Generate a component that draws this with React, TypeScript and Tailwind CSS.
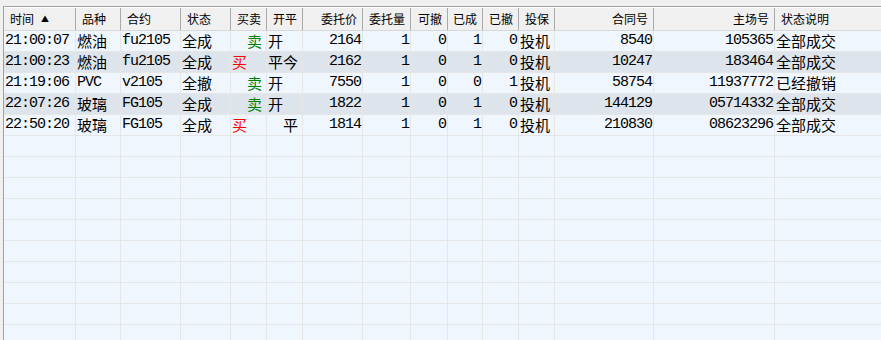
import React from "react";

const cols = [
  { h: "时间 ▲", w: "l" },
  { h: "品种", w: "l" },
  { h: "合约", w: "l" },
  { h: "状态", w: "l" },
  { h: "买卖", w: "l" },
  { h: "开平", w: "l" },
  { h: "委托价", w: "r" },
  { h: "委托量", w: "r" },
  { h: "可撤", w: "r" },
  { h: "已成", w: "r" },
  { h: "已撤", w: "r" },
  { h: "投保", w: "l" },
  { h: "合同号", w: "r" },
  { h: "主场号", w: "r" },
  { h: "状态说明", w: "l" },
];

const rows = [
  ["21:00:07", "燃油", "fu2105", "全成", "卖", "开", "2164", "1", "0", "1", "0", "投机", "8540", "105365", "全部成交"],
  ["21:00:23", "燃油", "fu2105", "全成", "买", "平今", "2162", "1", "0", "1", "0", "投机", "10247", "183464", "全部成交"],
  ["21:19:06", "PVC", "v2105", "全撤", "卖", "开", "7550", "1", "0", "0", "1", "投机", "58754", "11937772", "已经撤销"],
  ["22:07:26", "玻璃", "FG105", "全成", "卖", "开", "1822", "1", "0", "1", "0", "投机", "144129", "05714332", "全部成交"],
  ["22:50:20", "玻璃", "FG105", "全成", "买", "平", "1814", "1", "0", "1", "0", "投机", "210830", "08623296", "全部成交"],
];

const grid =
  "grid grid-cols-[72px_45px_60px_50px_36px_36px_60px_48px_37px_35px_36px_36px_99px_121px_1fr]";

const isCjk = (s: string) => /[\u4e00-\u9fff]/.test(s);

function BodyCell({ v, i }: { v: string; i: number }) {
  const right = cols[i].w === "r";
  let color = "text-black";
  let pad = right ? "justify-end pr-[1px]" : "pl-[1px]";
  if (i === 4) {
    color = v === "卖" ? "text-[#008000]" : "text-[#ff0000]";
    pad = v === "卖" ? "pl-[16px]" : "pl-[1px]";
  }
  if (i === 5 && v === "平") pad = "pl-[16px]";
  const font = isCjk(v)
    ? "font-['Noto_Sans_CJK_SC',sans-serif] text-[15px]"
    : "font-['Liberation_Mono',monospace] text-[15px] tracking-[-1px]";
  return (
    <div
      className={`flex items-center overflow-hidden whitespace-nowrap border-r border-[#e6e6e6] last:border-r-0 ${pad} ${color} ${font}`}
    >
      {v}
    </div>
  );
}

export default function App() {
  const empty = Array.from({ length: 14 }, () => Array(15).fill(""));
  return (
    <div className="w-[881px] h-[340px] overflow-hidden bg-[#f0f0f0] pt-[6px] pl-[3px]">
      <div className="h-full border-t border-l border-[#a0a0a0] bg-[#f0f6fe]">
        {/* header */}
        <div className={`${grid} h-[24px] bg-[#f0f0f0] border-t border-white border-b border-b-[#d8d8d8]`}>
          {cols.map((c, i) => (
            <div
              key={i}
              className={`flex items-center whitespace-nowrap border-r border-[#a9a9a9] last:border-r-0 text-[12px] text-black font-['Noto_Sans_CJK_SC',sans-serif] ${
                c.w === "r" ? "justify-end pr-[5px]" : "pl-[6px]"
              }`}
            >
              {i === 0 ? (
                <>
                  时间<span className="ml-[7px] text-[8px]">▲</span>
                </>
              ) : (
                c.h
              )}
            </div>
          ))}
        </div>
        {/* rows */}
        {rows.map((r, ri) => (
          <div
            key={ri}
            className={`${grid} h-[21px] border-b border-[#e6e6e6] ${ri % 2 === 1 ? "bg-[#dee4ec]" : "bg-[#f0f6fe]"}`}
          >
            {r.map((v, i) => (
              <BodyCell key={i} v={v} i={i} />
            ))}
          </div>
        ))}
        {empty.map((r, ri) => (
          <div key={"e" + ri} className={`${grid} h-[21px] border-b border-[#e6e6e6] bg-[#f0f6fe]`}>
            {r.map((_, i) => (
              <div key={i} className="border-r border-[#e6e6e6] last:border-r-0" />
            ))}
          </div>
        ))}
      </div>
    </div>
  );
}
